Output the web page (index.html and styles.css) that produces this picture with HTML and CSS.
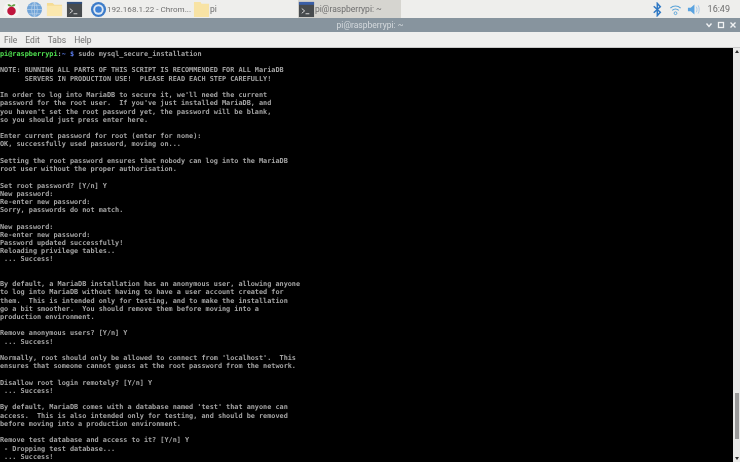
FILE: index.html
```html
<!DOCTYPE html>
<html lang="en">
<head>
<meta charset="utf-8">
<title>pi@raspberrypi: ~</title>
<link rel="stylesheet" href="styles.css">
</head>
<body>
<header class="panel">
  <div class="launchers">
    <svg class="icon menu-icon" viewBox="0 0 18 18"><circle cx="9" cy="9" r="8.5" fill="#f4f4f2"/><path d="M9 5 C7 3 5 3 4.800 4 C5.500 5.500 7 6 9 6 C11 6 12.500 5.500 13.200 4 C13 3 11 3 9 5Z" fill="#5d9c3c"/><circle cx="9" cy="10.500" r="4.500" fill="#c0143c"/></svg>
    <svg class="icon" viewBox="0 0 18 18"><circle cx="9" cy="9" r="8" fill="#6fa3d8"/><path d="M1 9H17M9 1V17M3 4.500H15M3 13.500H15M9 1C5 5 5 13 9 17M9 1C13 5 13 13 9 17" stroke="#b9d2ea" stroke-width=".8" fill="none"/></svg>
    <svg class="icon" viewBox="0 0 18 18"><path d="M1 2H7L9 4H17V16H1Z" fill="#f5dc95"/><path d="M1 5H17V16H1Z" fill="#fbe8ae"/></svg>
    <svg class="icon" viewBox="0 0 18 18"><rect x="1" y="1" width="16" height="16" fill="#474b4e"/><rect x="1" y="1" width="16" height="2" fill="#2f4f7f"/><path d="M4 8L7 10.500L4 13M8 13.500H12" stroke="#e0e0e0" stroke-width="1" fill="none"/></svg>
  </div>
  <div class="tasks">
    <div class="task">
      <svg class="icon" viewBox="0 0 18 18"><circle cx="9" cy="9" r="8" fill="#3d7cc9"/><circle cx="9" cy="9" r="5.500" fill="#dfe9f3"/><circle cx="9" cy="9" r="3.500" fill="#3f82d6"/></svg>
      <span class="label narrow">192.168.1.22 - Chrom...</span>
    </div>
    <div class="task">
      <svg class="icon" viewBox="0 0 18 18"><path d="M1 1H8L9 3H17V17H1Z" fill="#f8e3a4"/></svg>
      <span class="label">pi</span>
    </div>
    <div class="task active">
      <svg class="icon" viewBox="0 0 18 18"><rect x="1" y="1" width="16" height="16" fill="#474b4e"/><rect x="1" y="1" width="16" height="3" fill="#3a5fa8"/><path d="M4 8L7 10.500L4 13M8 13.500H12" stroke="#e0e0e0" stroke-width="1" fill="none"/></svg>
      <span class="label">pi@raspberrypi: ~</span>
    </div>
  </div>
  <div class="tray">
    <svg class="tray-icon" viewBox="0 0 12 16"><path d="M2 4.500L9 11L5.800 14.500V1.500L9 5L2 11.500" stroke="#2f78c4" stroke-width="1.600" fill="none"/></svg>
    <svg class="tray-icon" viewBox="0 0 14 14"><path d="M1.500 5.500C4.500 2.500 9.500 2.500 12.500 5.500M3.500 8C5.500 6 8.500 6 10.500 8" stroke="#5aa3d8" stroke-width="1.300" fill="none"/><circle cx="7" cy="11" r="1.500" fill="none" stroke="#5aa3d8"/></svg>
    <svg class="tray-icon" viewBox="0 0 14 14"><path d="M1 5H4L8 1.500V12.500L4 9H1Z" fill="#5aa3e0"/><path d="M10 4C11 5.500 11 8.500 10 10M12 2.500C13.500 5 13.500 9 12 11.500" stroke="#a5c8e8" fill="none"/></svg>
    <span class="clock">16:49</span>
  </div>
</header>
<div class="titlebar">
  <span class="title">pi@raspberrypi: ~</span>
  <div class="controls">
    <svg class="ctl" viewBox="0 0 8 8"><path d="M1.500 2.500L4 5.500L6.500 2.500" stroke="#f0f2f3" stroke-width="1.400" fill="none"/></svg>
    <svg class="ctl" viewBox="0 0 8 8"><rect x="1.500" y="1.500" width="5" height="5" stroke="#f0f2f3" stroke-width="1.300" fill="none"/></svg>
    <svg class="ctl" viewBox="0 0 8 8"><path d="M1.500 1.500L6.500 6.500M6.500 1.500L1.500 6.500" stroke="#f0f2f3" stroke-width="1.400" fill="none"/></svg>
  </div>
</div>
<nav class="menubar">
  <span>File</span><span>Edit</span><span>Tabs</span><span>Help</span>
</nav>
<main class="terminal">
<pre class="output"><span class="user">pi@raspberrypi</span>:<span class="path">~</span> <span class="path">$</span> sudo mysql_secure_installation

NOTE: RUNNING ALL PARTS OF THIS SCRIPT IS RECOMMENDED FOR ALL MariaDB
      SERVERS IN PRODUCTION USE!  PLEASE READ EACH STEP CAREFULLY!

In order to log into MariaDB to secure it, we'll need the current
password for the root user.  If you've just installed MariaDB, and
you haven't set the root password yet, the password will be blank,
so you should just press enter here.

Enter current password for root (enter for none):
OK, successfully used password, moving on...

Setting the root password ensures that nobody can log into the MariaDB
root user without the proper authorisation.

Set root password? [Y/n] Y
New password:
Re-enter new password:
Sorry, passwords do not match.

New password:
Re-enter new password:
Password updated successfully!
Reloading privilege tables..
 ... Success!


By default, a MariaDB installation has an anonymous user, allowing anyone
to log into MariaDB without having to have a user account created for
them.  This is intended only for testing, and to make the installation
go a bit smoother.  You should remove them before moving into a
production environment.

Remove anonymous users? [Y/n] Y
 ... Success!

Normally, root should only be allowed to connect from 'localhost'.  This
ensures that someone cannot guess at the root password from the network.

Disallow root login remotely? [Y/n] Y
 ... Success!

By default, MariaDB comes with a database named 'test' that anyone can
access.  This is also intended only for testing, and should be removed
before moving into a production environment.

Remove test database and access to it? [Y/n] Y
 - Dropping test database...
 ... Success!</pre>
  <div class="scrollbar">
    <div class="arrow up"></div>
    <div class="thumb"></div>
    <div class="arrow"></div>
  </div>
</main>
</body>
</html>
```
FILE: styles.css
```css
html, body {
  margin: 0;
  height: 100%;
  overflow: hidden;
}
body {
  display: flex;
  flex-direction: column;
  height: 462px;
  font-family: "Roboto", "Liberation Sans", sans-serif;
  background: #000;
}
.panel {
  height: 18px;
  flex: none;
  display: flex;
  align-items: center;
  background: #eeeeec;
  color: #6e6e6e;
  font-size: 8.500px;
}
.launchers {
  display: flex;
  align-items: center;
  gap: 3px;
  width: 90px;
  padding-left: 3px;
  box-sizing: border-box;
  filter: blur(.4px);
}
.icon {
  width: 17px;
  height: 17px;
  flex: none;
  filter: blur(.3px);
}
.menu-icon {
  margin-right: 3px;
}
.tasks {
  display: flex;
  height: 18px;
}
.task {
  width: 103px;
  display: flex;
  align-items: center;
  gap: 0;
  white-space: nowrap;
}
.label {
  filter: blur(.3px);
}
.narrow {
  font-size: 8.100px;
}
.task.active {
  background: #d6d5d0;
  margin-left: 2px;
}
.tray {
  margin-left: auto;
  display: flex;
  align-items: center;
  gap: 5px;
  padding-right: 10px;
}
.tray-icon {
  width: 13px;
  height: 15px;
}
.clock {
  margin-left: 3px;
  font-size: 9px;
  filter: blur(.3px);
}
.titlebar {
  height: 14px;
  flex: none;
  background: #87949e;
  color: #d5dade;
  font-size: 8.500px;
  display: flex;
  align-items: center;
  justify-content: center;
  position: relative;
}
.title {
  filter: blur(.3px);
}
.controls {
  position: absolute;
  right: 3px;
  top: 3px;
  display: flex;
  gap: 4px;
}
.ctl {
  width: 8px;
  height: 8px;
}
.menubar {
  height: 16px;
  flex: none;
  box-sizing: border-box;
  background: #efefee;
  border-bottom: 1px solid #c9c9c9;
  color: #707070;
  font-size: 8.500px;
  display: flex;
  align-items: center;
  gap: 8px;
  padding-left: 4px;
}
.menubar span {
  filter: blur(.3px);
}
.terminal {
  flex: 1;
  min-height: 0;
  display: flex;
  background: #000;
}
.output {
  flex: 1;
  margin: 0;
  padding-top: 2px;
  overflow: hidden;
  font-family: "DejaVu Sans Mono", monospace;
  font-size: 6.830px;
  line-height: 8.220px;
  font-weight: 700;
  color: #a4a4a4;
  filter: blur(.35px);
}
.user {
  color: #4fe04f;
}
.path {
  color: #5a7be8;
}
.scrollbar {
  width: 7px;
  flex: none;
  background: #e9e9e8;
  display: flex;
  flex-direction: column;
  align-items: center;
}
.thumb {
  width: 4px;
  height: 46px;
  margin-top: 340px;
  background: #9b9b9b;
}
.arrow {
  width: 0;
  height: 0;
  border-left: 2px solid transparent;
  border-right: 2px solid transparent;
  border-top: 3px solid #333;
  margin-top: auto;
  margin-bottom: 2px;
}
.arrow.up {
  margin-top: 2px;
  margin-bottom: 0;
  border-top: 0;
  border-bottom: 3px solid #333;
}
```
